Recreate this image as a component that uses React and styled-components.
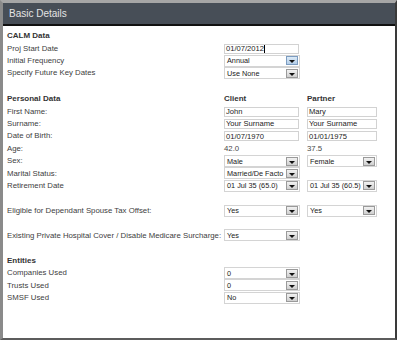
import React from 'react';
import styled, { createGlobalStyle } from 'styled-components';

const GlobalStyle = createGlobalStyle`
    body {
        margin: 0;
        background: #ffffff;
        font-family: "Liberation Sans", Arial, sans-serif;
    }
`;

const Frame = styled.div`
    width: 397px;
    height: 340px;
    box-sizing: border-box;
    border-top: 3px solid #a6a6a6;
    border-left: 3px solid #8a8a8a;
    border-right: 2px solid #3a3a3a;
    border-bottom: 2px solid #5c5c5c;
    background: #ffffff;
    overflow: hidden;
`;

const Header = styled.div`
    height: 21px;
    background: #474e57;
    border-bottom: 2px solid #111;
    padding-left: 6px;
    display: flex;
    align-items: center;
    font-size: 10px;
    color: #e4e4e4;
`;

const Body = styled.div`
    padding: 4px 0 0 4px;
`;

const Section = styled.div`
    display: grid;
    grid-template-columns: 217px 83px 70px;
    grid-auto-rows: 12.4px;
    margin-top: ${(p) => p.$gap || 0}px;
`;

const Label = styled.div`
    grid-column: 1;
    align-self: center;
    font-size: 7.8px;
    color: #404040;
    white-space: nowrap;
    line-height: 1;
`;

const Title = styled(Label)`
    font-weight: bold;
    font-size: 8px;
    color: #333;
    grid-column: ${(p) => p.$col || 1};
`;

const Value = styled.div`
    align-self: center;
    font-size: 7.8px;
    color: #484848;
    line-height: 1;
`;

const TextBox = styled.div`
    align-self: center;
    width: ${(p) => p.$w || 75}px;
    height: 10px;
    box-sizing: border-box;
    border: 1px solid #d2d2d2;
    padding-left: 1px;
    display: flex;
    align-items: center;
    font-size: 7.6px;
    color: #222;
    white-space: nowrap;
`;

const Caret = styled.span`
    display: inline-block;
    width: 1px;
    height: 8px;
    background: #000;
`;

const SelectBox = styled.div`
    align-self: center;
    width: ${(p) => p.$w || 76}px;
    height: 12px;
    box-sizing: border-box;
    border: 1px solid #d4d4d4;
    padding: 0 1px 0 2px;
    display: flex;
    align-items: center;
    justify-content: space-between;
    font-size: 7.3px;
    color: #222;
    white-space: nowrap;
    overflow: hidden;
`;

const DropButton = styled.div`
    flex: none;
    width: 12px;
    height: 9px;
    box-sizing: border-box;
    border: 1px solid ${(p) => (p.$active ? '#7c9cc0' : '#9a9a9a')};
    background: ${(p) =>
        p.$active
            ? 'linear-gradient(#dcebf8, #b3cde8)'
            : 'linear-gradient(#f2f2f2, #cfcfcf)'};
    display: flex;
    align-items: center;
    justify-content: center;

    &::after {
        content: '';
        margin-top: 2px;
        border-left: 3px solid transparent;
        border-right: 3px solid transparent;
        border-top: 3px solid #111;
    }
`;

const Select = ({ value, w, active }) => (
    <SelectBox $w={w}>
        <span>{value}</span>
        <DropButton $active={active} />
    </SelectBox>
);

const Empty = () => <div />;

export default function App() {
    return (
        <>
            <GlobalStyle />
            <Frame>
                <Header>Basic Details</Header>
                <Body>
                    <Section>
                        <Title>CALM Data</Title>
                        <Empty /><Empty />
                        <Label>Proj Start Date</Label>
                        <TextBox>01/07/2012<Caret /></TextBox>
                        <Empty />
                        <Label>Initial Frequency</Label>
                        <Select value="Annual" active />
                        <Empty />
                        <Label>Specify Future Key Dates</Label>
                        <Select value="Use None" />
                    </Section>

                    <Section $gap={13.4}>
                        <Title>Personal Data</Title>
                        <Title $col={2}>Client</Title>
                        <Title $col={3}>Partner</Title>
                        <Label>First Name:</Label>
                        <TextBox>John</TextBox>
                        <TextBox $w={70}>Mary</TextBox>
                        <Label>Surname:</Label>
                        <TextBox>Your Surname</TextBox>
                        <TextBox $w={70}>Your Surname</TextBox>
                        <Label>Date of Birth:</Label>
                        <TextBox>01/07/1970</TextBox>
                        <TextBox $w={70}>01/01/1975</TextBox>
                        <Label>Age:</Label>
                        <Value>42.0</Value>
                        <Value>37.5</Value>
                        <Label>Sex:</Label>
                        <Select value="Male" />
                        <Select value="Female" w={70} />
                        <Label>Marital Status:</Label>
                        <Select value="Married/De Facto" />
                        <Empty />
                        <Label>Retirement Date</Label>
                        <Select value="01 Jul 35 (65.0)" />
                        <Select value="01 Jul 35 (60.5)" w={70} />
                    </Section>

                    <Section $gap={12.4}>
                        <Label>Eligible for Dependant Spouse Tax Offset:</Label>
                        <Select value="Yes" />
                        <Select value="Yes" w={70} />
                    </Section>

                    <Section $gap={12.4}>
                        <Label>Existing Private Hospital Cover / Disable Medicare Surcharge:</Label>
                        <Select value="Yes" />
                    </Section>

                    <Section $gap={12.8}>
                        <Title>Entities</Title>
                        <Empty /><Empty />
                        <Label>Companies Used</Label>
                        <Select value="0" />
                        <Empty />
                        <Label>Trusts Used</Label>
                        <Select value="0" />
                        <Empty />
                        <Label>SMSF Used</Label>
                        <Select value="No" />
                    </Section>
                </Body>
            </Frame>
        </>
    );
}
